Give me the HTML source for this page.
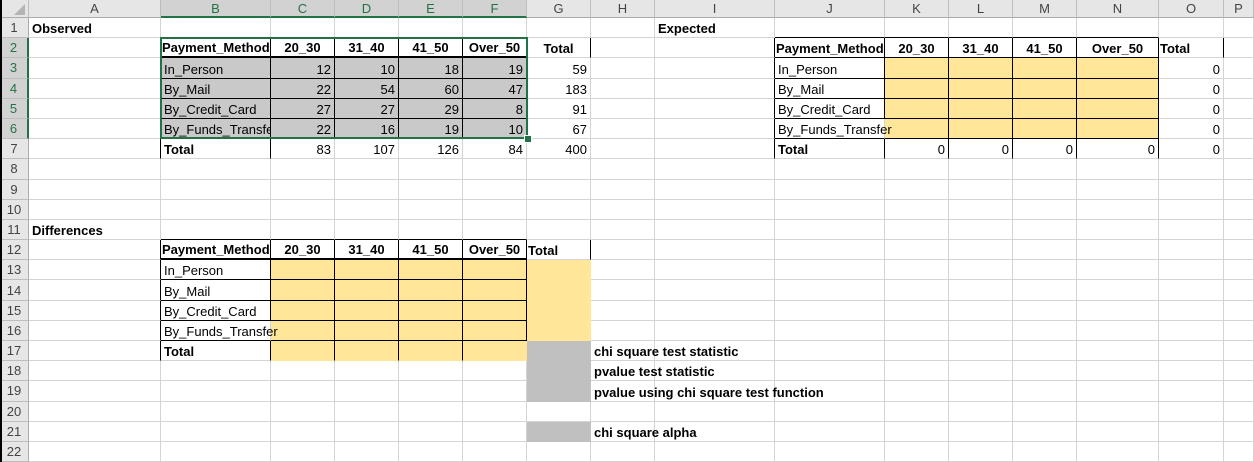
<!DOCTYPE html>
<html><head><meta charset="utf-8"><style>
body{margin:0;width:1254px;height:462px;overflow:hidden;background:#fff;font-family:"Liberation Sans",Arial,sans-serif;font-size:13px;color:#000;position:relative}
table{border-collapse:separate;border-spacing:0;table-layout:fixed;width:1254px;position:absolute;left:0;top:0}
td{border-right:1px solid #d4d4d4;border-bottom:1px solid #d4d4d4;padding:0 3px 1px 3px;white-space:nowrap;overflow:visible;vertical-align:bottom;box-sizing:border-box}
tr{height:20.2px}
tr.h{height:18px}
tr.h td{background:#e6e6e6;color:#444;text-align:center;vertical-align:middle;border-right:1px solid #bdbdbd;border-bottom:1px solid #ababab;padding:0}
tr.h td.s{background:#d2d2d2;color:#217346;border-bottom:2px solid #217346}
td.rh{background:#e6e6e6;color:#444;text-align:center;padding:0;border-right:1px solid #ababab;border-bottom:1px solid #bdbdbd;vertical-align:middle}
td.rh.s{background:#d2d2d2;color:#217346;border-right:2px solid #217346}
.b{font-weight:bold}
.r{text-align:right}
.c{text-align:center}
.rk{border-right:1px solid #000}
.bk{border-bottom:1px solid #000}
.bk2{border-bottom:2px solid #000}
.g{background:#c9c9c9}
.y{background:#ffe699;border-right-color:#ffe699;border-bottom-color:#ffe699}
.y.rk{border-right-color:#000}.y.bk{border-bottom-color:#000}
.gr{background:#c0c0c0;border-right-color:#c0c0c0;border-bottom-color:#c0c0c0}
.clip{overflow:hidden;text-overflow:clip}
</style></head><body>
<table>
<colgroup><col style="width:29px"><col style="width:132px"><col style="width:110px"><col style="width:64px"><col style="width:64px"><col style="width:64px"><col style="width:64px"><col style="width:64px"><col style="width:64px"><col style="width:120px"><col style="width:110px"><col style="width:64px"><col style="width:64px"><col style="width:64px"><col style="width:82px"><col style="width:65px"><col style="width:30px"></colgroup>
<tr class="h"><td></td><td>A</td><td class="s">B</td><td class="s">C</td><td class="s">D</td><td class="s">E</td><td class="s">F</td><td>G</td><td>H</td><td>I</td><td>J</td><td>K</td><td>L</td><td>M</td><td>N</td><td>O</td><td>P</td></tr>
<tr><td class="rh">1</td><td class="b">Observed</td><td class="bk"></td><td class="bk"></td><td class="bk"></td><td class="bk"></td><td class="bk"></td><td></td><td></td><td class="b">Expected</td><td class="bk"></td><td class="bk"></td><td class="bk"></td><td class="bk"></td><td class="bk"></td><td></td><td></td></tr>
<tr><td class="rh s">2</td><td class="rk"></td><td class="b rk bk2 clip" style="padding-left:1px">Payment_Method</td><td class="b c rk bk2">20_30</td><td class="b c rk bk2">31_40</td><td class="b c rk bk2">41_50</td><td class="b c rk bk2">Over_50</td><td class="b c rk">Total</td><td></td><td class="rk"></td><td class="b rk bk clip" style="padding-left:1px">Payment_Method</td><td class="b c rk bk">20_30</td><td class="b c rk bk">31_40</td><td class="b c rk bk">41_50</td><td class="b c rk bk">Over_50</td><td class="b rk" style="padding-left:1px">Total</td><td></td></tr>
<tr><td class="rh s">3</td><td class="rk"></td><td class="g rk bk">In_Person</td><td class="g r rk bk">12</td><td class="g r rk bk">10</td><td class="g r rk bk">18</td><td class="g r rk bk">19</td><td class="r">59</td><td></td><td class="rk"></td><td class="rk bk">In_Person</td><td class="y rk bk"></td><td class="y rk bk"></td><td class="y rk bk"></td><td class="y rk bk"></td><td class="r">0</td><td></td></tr>
<tr><td class="rh s">4</td><td class="rk"></td><td class="g rk bk">By_Mail</td><td class="g r rk bk">22</td><td class="g r rk bk">54</td><td class="g r rk bk">60</td><td class="g r rk bk">47</td><td class="r">183</td><td></td><td class="rk"></td><td class="rk bk">By_Mail</td><td class="y rk bk"></td><td class="y rk bk"></td><td class="y rk bk"></td><td class="y rk bk"></td><td class="r">0</td><td></td></tr>
<tr><td class="rh s">5</td><td class="rk"></td><td class="g rk bk">By_Credit_Card</td><td class="g r rk bk">27</td><td class="g r rk bk">27</td><td class="g r rk bk">29</td><td class="g r rk bk">8</td><td class="r">91</td><td></td><td class="rk"></td><td class="rk bk">By_Credit_Card</td><td class="y rk bk"></td><td class="y rk bk"></td><td class="y rk bk"></td><td class="y rk bk"></td><td class="r">0</td><td></td></tr>
<tr><td class="rh s">6</td><td class="rk"></td><td class="g rk bk clip">By_Funds_Transfer</td><td class="g r rk bk">22</td><td class="g r rk bk">16</td><td class="g r rk bk">19</td><td class="g r rk bk">10</td><td class="r">67</td><td></td><td class="rk"></td><td class="bk" style="position:relative;z-index:2">By_Funds_Transfer</td><td class="y rk bk"></td><td class="y rk bk"></td><td class="y rk bk"></td><td class="y rk bk"></td><td class="r">0</td><td></td></tr>
<tr><td class="rh">7</td><td class="rk"></td><td class="b rk">Total</td><td class="r">83</td><td class="r">107</td><td class="r">126</td><td class="r">84</td><td class="r">400</td><td></td><td class="rk"></td><td class="b rk">Total</td><td class="r rk">0</td><td class="r rk">0</td><td class="r rk">0</td><td class="r rk">0</td><td class="r">0</td><td></td></tr>
<tr><td class="rh">8</td><td></td><td></td><td></td><td></td><td></td><td></td><td></td><td></td><td></td><td></td><td></td><td></td><td></td><td></td><td></td><td></td></tr>
<tr><td class="rh">9</td><td></td><td></td><td></td><td></td><td></td><td></td><td></td><td></td><td></td><td></td><td></td><td></td><td></td><td></td><td></td><td></td></tr>
<tr><td class="rh">10</td><td></td><td></td><td></td><td></td><td></td><td></td><td></td><td></td><td></td><td></td><td></td><td></td><td></td><td></td><td></td><td></td></tr>
<tr><td class="rh">11</td><td class="b">Differences</td><td class="bk"></td><td class="bk"></td><td class="bk"></td><td class="bk"></td><td class="bk"></td><td></td><td></td><td></td><td></td><td></td><td></td><td></td><td></td><td></td><td></td></tr>
<tr><td class="rh">12</td><td class="rk"></td><td class="b rk bk2 clip" style="padding-left:1px">Payment_Method</td><td class="b c rk bk2">20_30</td><td class="b c rk bk2">31_40</td><td class="b c rk bk2">41_50</td><td class="b c rk bk2">Over_50</td><td class="b rk" style="padding-left:1px">Total</td><td></td><td></td><td></td><td></td><td></td><td></td><td></td><td></td><td></td></tr>
<tr><td class="rh">13</td><td class="rk"></td><td class="rk bk">In_Person</td><td class="y rk bk"></td><td class="y rk bk"></td><td class="y rk bk"></td><td class="y rk bk"></td><td class="y"></td><td></td><td></td><td></td><td></td><td></td><td></td><td></td><td></td><td></td></tr>
<tr><td class="rh">14</td><td class="rk"></td><td class="rk bk">By_Mail</td><td class="y rk bk"></td><td class="y rk bk"></td><td class="y rk bk"></td><td class="y rk bk"></td><td class="y"></td><td></td><td></td><td></td><td></td><td></td><td></td><td></td><td></td><td></td></tr>
<tr><td class="rh">15</td><td class="rk"></td><td class="rk bk">By_Credit_Card</td><td class="y rk bk"></td><td class="y rk bk"></td><td class="y rk bk"></td><td class="y rk bk"></td><td class="y"></td><td></td><td></td><td></td><td></td><td></td><td></td><td></td><td></td><td></td></tr>
<tr><td class="rh">16</td><td class="rk"></td><td class="bk" style="position:relative;z-index:2">By_Funds_Transfer</td><td class="y rk bk"></td><td class="y rk bk"></td><td class="y rk bk"></td><td class="y rk bk"></td><td class="y"></td><td></td><td></td><td></td><td></td><td></td><td></td><td></td><td></td><td></td></tr>
<tr><td class="rh">17</td><td class="rk"></td><td class="b rk">Total</td><td class="y rk"></td><td class="y rk"></td><td class="y rk"></td><td class="y"></td><td class="gr"></td><td class="b" style="position:relative;z-index:2">chi square test statistic</td><td></td><td></td><td></td><td></td><td></td><td></td><td></td><td></td></tr>
<tr><td class="rh">18</td><td></td><td></td><td></td><td></td><td></td><td></td><td class="gr"></td><td class="b" style="position:relative;z-index:2">pvalue test statistic</td><td></td><td></td><td></td><td></td><td></td><td></td><td></td><td></td></tr>
<tr><td class="rh">19</td><td></td><td></td><td></td><td></td><td></td><td></td><td class="gr"></td><td class="b" style="position:relative;z-index:2">pvalue using chi square test function</td><td></td><td></td><td></td><td></td><td></td><td></td><td></td><td></td></tr>
<tr><td class="rh">20</td><td></td><td></td><td></td><td></td><td></td><td></td><td></td><td></td><td></td><td></td><td></td><td></td><td></td><td></td><td></td><td></td></tr>
<tr><td class="rh">21</td><td></td><td></td><td></td><td></td><td></td><td></td><td class="gr"></td><td class="b" style="position:relative;z-index:2">chi square alpha</td><td></td><td></td><td></td><td></td><td></td><td></td><td></td><td></td></tr>
<tr><td class="rh">22</td><td></td><td></td><td></td><td></td><td></td><td></td><td></td><td></td><td></td><td></td><td></td><td></td><td></td><td></td><td></td><td></td></tr>
</table>
<div style="position:absolute;left:160px;top:37px;width:368px;height:102px;border:2px solid #217346;box-sizing:border-box;z-index:5"></div>
<div style="position:absolute;left:524px;top:135px;width:6px;height:6px;background:#217346;border:1px solid #fff;z-index:6"></div>
<div style="position:absolute;left:0;top:0;width:2px;height:462px;background:#000;z-index:7"></div>
<div style="position:absolute;left:14px;top:4px;width:0;height:0;border-left:11px solid transparent;border-bottom:11px solid #b4b4b4;z-index:7"></div>
</body></html>
